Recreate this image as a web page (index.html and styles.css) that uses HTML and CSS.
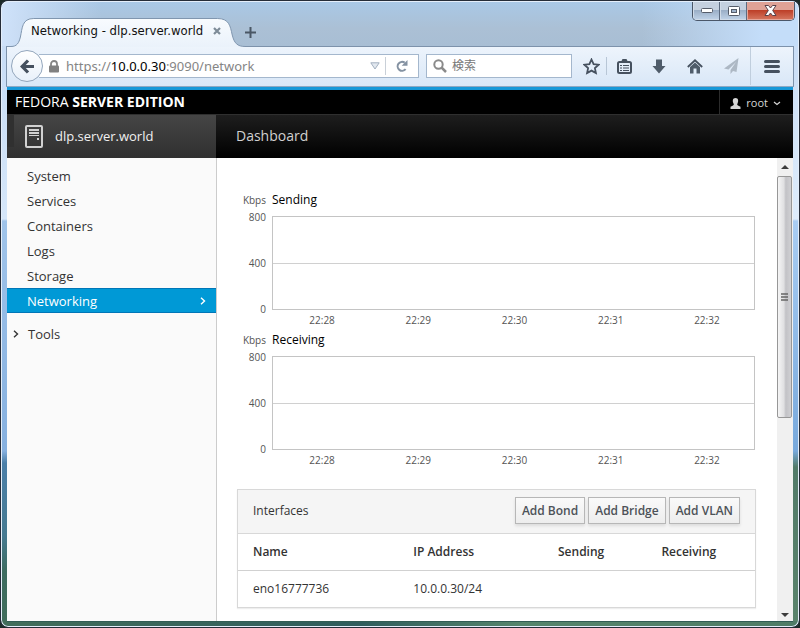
FILE: index.html
```html
<!DOCTYPE html>
<html lang="en">
<head>
<meta charset="utf-8">
<title>Networking - dlp.server.world</title>
<link rel="stylesheet" href="styles.css">
</head>
<body>
<div class="window">
  <header class="titlebar">
    <div class="tab">
      <svg class="tab-shape" viewBox="0 0 240 29" preserveAspectRatio="none" aria-hidden="true">
        <defs><linearGradient id="tabfill" x1="0" y1="0" x2="0" y2="1"><stop offset="0" stop-color="#f8fbfe"/><stop offset="1" stop-color="#eaf2fb"/></linearGradient></defs>
        <path d="M0 29V28.500H4C10 28.500 12 25 13.500 19C15.500 10 15 .500 27 .500H212C224 .500 225 8 227 17C229 25 232 28.500 240 28.500V29Z" fill="url(#tabfill)"/>
        <path d="M0 28.500H4C10 28.500 12 25 13.500 19C15.500 10 15 .500 27 .500H212C224 .500 225 8 227 17C229 25 232 28.500 240 28.500" fill="none" stroke="#8096af"/>
      </svg>
      <span class="tab-title">Networking - dlp.server.world</span>
      <button class="plain tab-close" aria-label="Close tab"><svg width="8" height="8" viewBox="0 0 8 8"><path d="M1 1L7 7M7 1L1 7" stroke="#7e8b98" stroke-width="2.200"/></svg></button>
    </div>
    <button class="plain new-tab" aria-label="New tab"><svg width="11" height="11" viewBox="0 0 11 11"><path d="M5.500 0V11M0 5.500H11" stroke="#4a5765" stroke-width="2"/></svg></button>
    <div class="window-buttons">
      <button class="win" aria-label="Minimize"><svg width="12" height="5" viewBox="0 0 12 5"><rect x=".5" y=".5" width="11" height="4" rx="1" fill="#fff" stroke="#555c69"/></svg></button>
      <button class="win" aria-label="Maximize"><svg width="12" height="10" viewBox="0 0 12 10"><rect x=".5" y=".5" width="11" height="9" rx="1" fill="#fff" stroke="#555c69"/><rect x="3.500" y="3.500" width="5" height="3" fill="#9db2cb" stroke="#555c69"/></svg></button>
      <button class="win win-close" aria-label="Close"><svg width="13" height="11" viewBox="0 0 13 11"><path d="M1 .5H4.500L6.500 3L8.500 .5H12L8.700 5.500L12 10.500H8.500L6.500 8L4.500 10.500H1L4.300 5.500Z" fill="#fff" stroke="#59424a"/></svg></button>
    </div>
  </header>

  <div class="toolbar">
    <button class="back" aria-label="Back"><svg width="15" height="15" viewBox="0 0 15 15"><path d="M8 1.500L2.200 7.500L8 13.500M2.500 7.500H14" fill="none" stroke="#46515f" stroke-width="3.200"/></svg></button>
    <div class="urlbar">
      <svg width="10" height="13" viewBox="0 0 10 13"><path d="M2 7V4A3 3 0 0 1 8 4V7" fill="none" stroke="#858585" stroke-width="1.800"/><rect y="5.500" width="10" height="7" rx="1" fill="#808080"/></svg>
      <a class="url" href="#">https://<b>10.0.0.30</b>:9090/network</a>
      <button class="plain" aria-label="History"><svg width="10" height="8" viewBox="0 0 10 8"><path d="M.8 .8H9.200L5 7Z" fill="#e2e8ef" stroke="#a3b0bf"/></svg></button>
      <button class="plain reload" aria-label="Reload"><svg width="12" height="12" viewBox="0 0 12 12"><path d="M9.600 9.200A4.500 4.500 0 1 1 8.700 2.600" fill="none" stroke="#8492a2" stroke-width="2"/><path d="M11.500 0V5.800H5.700Z" fill="#8492a2"/></svg></button>
    </div>
    <label class="search">
      <svg width="14" height="14" viewBox="0 0 14 14"><circle cx="5.500" cy="5.500" r="4.200" fill="none" stroke="#8a8a8a" stroke-width="2"/><path d="M8.500 8.500L13 13" stroke="#8a8a8a" stroke-width="2.500"/></svg>
      <input type="search" placeholder="検索" aria-label="検索">
    </label>
    <button class="plain tool star" aria-label="Bookmark"><svg width="17" height="17" viewBox="0 0 17 17"><path d="M8.500 1.500L10.600 6.100L15.600 6.700L11.900 10.100L12.900 15.100L8.500 12.600L4.100 15.100L5.100 10.100L1.400 6.700L6.400 6.100Z" fill="none" stroke="#46515f" stroke-width="1.800"/></svg></button>
    <button class="plain tool" aria-label="Bookmarks list"><svg width="15" height="15" viewBox="0 0 15 15"><rect x="1" y="3" width="13" height="11" rx="1.500" fill="none" stroke="#46515f" stroke-width="2"/><path d="M4 3L5.500 0H9.500L11 3Z" fill="#46515f"/><path d="M3 6.500H12M3 9H12M3 11.500H12" stroke="#46515f"/><path d="M5.500 5V13" stroke="#e5eefa"/></svg></button>
    <button class="plain tool" aria-label="Downloads"><svg width="14" height="15" viewBox="0 0 14 15"><path d="M4 .5H10V7H13.500L7 14.500L.5 7H4Z" fill="#4f5c6a"/></svg></button>
    <button class="plain tool" aria-label="Home"><svg width="16" height="15" viewBox="0 0 16 15"><path d="M.8 8L8 1.300L15.200 8" fill="none" stroke="#46515f" stroke-width="1.800"/><path d="M3 8L8 3.500L13 8V14.500H9.500V9.500H6.500V14.500H3Z" fill="#4f5c6a"/></svg></button>
    <button class="plain tool" aria-label="Send"><svg width="15" height="16" viewBox="0 0 15 16"><path d="M14.500 0L0 10.500L4.500 11.500L12 4L6.500 12V16L9 13L12.500 14Z" fill="#adb8c4"/></svg></button>
    <button class="plain menu" aria-label="Menu"><svg width="16" height="13" viewBox="0 0 16 13"><path d="M1.500 1.500H14.500M1.500 6.500H14.500M1.500 11.500H14.500" stroke="#46515f" stroke-width="3" stroke-linecap="round"/></svg></button>
  </div>

  <div class="page">
    <div class="brand">
      <span>FEDORA <b>SERVER EDITION</b></span>
      <button class="plain user"><svg width="11" height="11" viewBox="0 0 11 11"><path d="M5.500 0C8.500 0 8.500 3 7.700 5C7 6.500 7 7 8 7.500L10.500 8.700V11H.5V8.700L3 7.500C4 7 4 6.500 3.300 5C2.500 3 2.500 0 5.500 0Z" fill="#d6d6d6"/></svg>root<svg width="8" height="5" viewBox="0 0 8 5"><path d="M1 1L4 3.500L7 1" fill="none" stroke="#d6d6d6" stroke-width="1.200"/></svg></button>
    </div>
    <nav class="topnav">
      <a class="host" href="#"><svg width="18" height="23" viewBox="0 0 18 23"><rect x="1" y="1" width="16" height="21" rx="1" fill="none" stroke="#d1d1d1" stroke-width="2"/><path d="M4 5H14M4 8H14" stroke="#d1d1d1" stroke-width="2"/><path d="M4 10.500H14" stroke="#d1d1d1"/><rect x="12" y="13" width="2" height="2" fill="#d1d1d1"/></svg>dlp.server.world</a>
      <a class="dashboard" href="#">Dashboard</a>
    </nav>
    <div class="body">
      <nav class="sidebar">
        <a href="#">System</a>
        <a href="#">Services</a>
        <a href="#">Containers</a>
        <a href="#">Logs</a>
        <a href="#">Storage</a>
        <a href="#" class="active">Networking<svg width="6" height="8" viewBox="0 0 6 8"><path d="M1 .8L4.500 4L1 7.200" fill="none" stroke="#fff" stroke-width="1.400"/></svg></a>
        <a href="#" class="tools"><svg width="6" height="8" viewBox="0 0 6 8"><path d="M1 .8L4.500 4L1 7.200" fill="none" stroke="#333" stroke-width="1.400"/></svg>Tools</a>
      </nav>
      <main class="content">
        <section class="chart">
          <div class="chart-head"><span class="unit">Kbps</span><h2>Sending</h2></div>
          <div class="chart-row">
            <div class="y-axis"><span>800</span><span>400</span><span>0</span></div>
            <div class="plot-col">
              <div class="plot"><div class="half"></div></div>
              <div class="x-axis"><span>22:28</span><span>22:29</span><span>22:30</span><span>22:31</span><span>22:32</span></div>
            </div>
          </div>
        </section>
        <section class="chart">
          <div class="chart-head"><span class="unit">Kbps</span><h2>Receiving</h2></div>
          <div class="chart-row">
            <div class="y-axis"><span>800</span><span>400</span><span>0</span></div>
            <div class="plot-col">
              <div class="plot"><div class="half"></div></div>
              <div class="x-axis"><span>22:28</span><span>22:29</span><span>22:30</span><span>22:31</span><span>22:32</span></div>
            </div>
          </div>
        </section>
        <section class="panel">
          <div class="panel-head">
            <h3>Interfaces</h3>
            <button class="btn">Add Bond</button>
            <button class="btn">Add Bridge</button>
            <button class="btn">Add VLAN</button>
          </div>
          <table>
            <thead><tr><th class="c-name">Name</th><th class="c-ip">IP Address</th><th class="c-send">Sending</th><th>Receiving</th></tr></thead>
            <tbody><tr><td>eno16777736</td><td>10.0.0.30/24</td><td></td><td></td></tr></tbody>
          </table>
        </section>
      </main>
      <div class="scrollbar" aria-hidden="true">
        <div class="arrow"><svg width="8" height="4" viewBox="0 0 8 4"><path d="M4 0L8 4H0Z" fill="#3c3c3c"/></svg></div>
        <div class="track"><div class="thumb"><svg width="8" height="8" viewBox="0 0 8 8"><path d="M0 1H7M0 4H7M0 7H7" stroke="#666" stroke-width="1.500"/></svg></div></div>
        <div class="arrow arrow-down"><svg width="8" height="4" viewBox="0 0 8 4"><path d="M4 4L0 0H8Z" fill="#3c3c3c"/></svg></div>
      </div>
    </div>
  </div>
</div>
</body>
</html>
```
FILE: styles.css
```css
* { box-sizing: border-box; }
body {
  margin: 0;
  background: #1c2a28;
  font: 13px/20px "Open Sans", "Noto Sans CJK JP", sans-serif;
  color: #333;
}
a { color: inherit; text-decoration: none; }
svg { display: block; flex: none; }
h2, h3 { margin: 0; font-weight: 400; }
button { font: inherit; color: inherit; }
.plain { display: flex; align-items: center; justify-content: center; border: 0; padding: 0; background: none; }

.window {
  display: flex;
  flex-direction: column;
  min-height: 100vh;
  padding: 0 5px 5px;
  border: 1px solid #252c38;
  border-radius: 8px;
  box-shadow: inset 0 0 0 1px #e4eefa;
  background:
    linear-gradient(90deg, #426e5b, #2f5d5d 45%, #55856c 65%, #4f7c66) bottom / 100% 6px no-repeat,
    linear-gradient(#c4daf5, #d5e6f9 218px, #a0c4ea 220px, #86b0df 450px, #4b7fa8 462px, #467a91 535px, #3d6c60 570px, #426e5b) left / 50% 100% no-repeat,
    linear-gradient(#c4daf5, #deecfb 218px, #a9cdf3 220px, #78a9dc 450px, #527b69 466px, #5b846c) right / 50% 100% no-repeat;
}

.titlebar {
  display: flex;
  align-items: flex-end;
  height: 45px;
  margin: 0 -4px;
  padding-left: 5px;
  border-top: 1px solid #e4eefa;
  border-radius: 7px 7px 0 0;
  background: linear-gradient(90deg, #cfe2fa, transparent 100px, transparent 640px, #c4ddf9 760px), linear-gradient(#a9c8e6, #abc0d5 60%, #a8bed4);
}
.tab {
  position: relative;
  display: flex;
  align-items: center;
  height: 29px;
  padding: 0 24px 3px;
  font: 13px/18px "DejaVu Sans Condensed", "Noto Sans", sans-serif;
  color: #111;
  margin-bottom: -1px;
}
.tab-shape { position: absolute; inset: 0; width: 100%; height: 100%; }
.tab-title, .tab-close { position: relative; }
.tab-close { margin-left: 10px; }
.new-tab { width: 11px; height: 28px; }
.window-buttons { display: flex; align-self: flex-start; height: 19px; margin: 0 3px 0 auto; border: 1px solid #4b5769; border-top: 0; border-radius: 0 0 5px 5px; overflow: hidden; }
.win {
  display: flex;
  align-items: center;
  justify-content: center;
  width: 27px;
  padding: 0;
  border: 1px solid #d0dbe8;
  border-top: 0;
  background: linear-gradient(#c4d0df 45%, #9bafc7 50%, #bdd0e5);
}
.win + .win { box-shadow: -1px 0 #5c6b80; }
.win-close { width: 47px; border-color: #e5a69a; background: linear-gradient(#dfa296 45%, #bd4029 50%, #d3725b); }

.toolbar {
  display: flex;
  align-items: center;
  height: 41px;
  padding: 0 0 1px 4px;
  border: 1px solid #7d92ab;
  border-bottom-color: #8fa8c2;
  background: linear-gradient(#edf4fc, #d9e7f7);
}
.back {
  display: flex;
  align-items: center;
  justify-content: center;
  flex: none;
  width: 32px;
  height: 32px;
  padding: 0;
  border: 1px solid #93a6bc;
  border-radius: 50%;
  background: linear-gradient(#fff, #e8f0fa);
  z-index: 1;
}
.urlbar, .search { display: flex; align-items: center; height: 24px; border: 1px solid #a4b7cd; background: #fff; }
.urlbar { flex: 380; margin-left: -4px; padding-left: 10px; min-width: 0; border-left: 0; }
.url { flex: 1; margin-left: 7px; font: 13px/20px "Noto Sans", sans-serif; color: #858585; }
.url b { font-weight: 400; color: #000; }
.reload { width: 33px; height: 18px; margin-left: 5px; border-left: 1px solid #c9d0d8; }
.search { flex: 142; min-width: 0; margin-left: 7px; padding-left: 6px; }
.search input { flex: 1; min-width: 0; border: 0; padding: 0 5px 2px; outline: 0; background: none; font: 12px/18px "Noto Sans CJK JP", sans-serif; }
.search input::placeholder { color: #777; opacity: 1; }
.tool { flex: none; width: 36px; height: 18px; }
.star + .tool { width: 34px; }
.star { width: 30px; margin-left: 5px; border-right: 1px solid #b8c6d6; }
.menu { flex: none; width: 43px; height: 38px; margin-left: 1px; border-left: 1px solid #c0cedd; }

.page {
  flex: 1;
  display: flex;
  flex-direction: column;
  margin: 0 1px;
  border-top: 3px solid #1798d8;
  border-bottom: 1px solid #315d55;
  background: #fff;
}
.brand {
  display: flex;
  align-items: stretch;
  justify-content: space-between;
  height: 24px;
  padding-left: 8px;
  font-size: 14px;
  line-height: 24px;
  background: #000;
  color: #fff;
}
.user { gap: 5px; padding: 2px 12px 0 10px; border-left: 1px solid #2c2c2c; font-size: 11px; color: #d6d6d6; }
.topnav { display: flex; height: 44px; border-top: 1px solid #2f2f2f; background: linear-gradient(#1e1e1e, #000); line-height: 42px; }
.host {
  display: flex;
  align-items: center;
  gap: 12px;
  width: 209px;
  padding: 0 0 1px 18px;
  background: linear-gradient(#303030, #303030) 0 0 / 7px 32px no-repeat, linear-gradient(#454545, #303030);
  color: #f0f0f0;
}
.dashboard { padding-left: 20px; font-size: 14px; color: #d1d1d1; }
.body { flex: 1; display: flex; }

.sidebar { width: 210px; padding-top: 5px; border-right: 1px solid #ccc; background: #fafafa; }
.sidebar a { display: flex; align-items: center; height: 25px; padding: 0 10px 0 20px; }
.sidebar .active { justify-content: space-between; border: solid #0076b7; border-width: 1px 0; background: #0099d6; color: #fff; }
.sidebar .tools { gap: 9px; margin-top: 8px; padding-left: 6px; }

.content { flex: 1; padding: 32px 22px 12px 20px; }
.chart { margin-bottom: 3px; font-size: 10px; line-height: 14px; color: #545454; }
.chart-head { display: flex; line-height: 20px; }
.chart-head h2 { font-size: 12px; color: #000; }
.unit, .y-axis { width: 35px; padding-right: 6px; text-align: right; }
.chart-row { display: flex; }
.y-axis { display: flex; flex-direction: column; justify-content: space-between; height: 106px; }
.plot-col { flex: 1; padding-top: 6px; }
.plot { height: 94px; border: 1px solid #c4c4c4; }
.half { height: 47px; border-bottom: 1px solid #d0d0d0; }
.x-axis { display: flex; padding: 3px 0 0 2px; text-align: center; }
.x-axis span { flex: 1; }

.panel { margin: 22px -1px 0 0; border: 1px solid #d8d8d8; box-shadow: 0 1px 1px #eee; font-size: 12px; }
.panel-head { display: flex; align-items: center; gap: 3px; height: 44px; padding: 0 15px 2px; border-bottom: 1px solid #d8d8d8; background: #f5f5f5; }
.panel-head h3 { flex: 1; font-size: 12px; }
.btn {
  height: 27px;
  padding: 0 6px;
  border: 1px solid #b7b7b7;
  background: linear-gradient(#fafafa, #ededed);
  box-shadow: 0 2px 3px rgba(0, 0, 0, .1);
  font-weight: 600;
  color: #4d5258;
}
table { width: 100%; border-collapse: separate; border-spacing: 0; table-layout: fixed; }
th, td { height: 37px; padding: 0 15px; text-align: left; }
td { height: 36px; }
th { font-weight: 600; border-bottom: 1px solid #d1d1d1; }
.c-name { width: 31%; }
.c-ip { width: 28%; }
.c-send { width: 20%; }

.scrollbar { display: flex; flex-direction: column; width: 16px; padding-right: 1px; background: #f0f0f0; }
.arrow { display: flex; align-items: center; justify-content: center; height: 18px; }
.arrow-down { height: 12px; }
.track { flex: 1; display: flex; align-items: flex-start; }
.thumb { display: flex; align-items: center; justify-content: center; width: 100%; height: 56%; border: 1px solid #979797; border-radius: 2px; background: linear-gradient(90deg, #f5f5f5, #e0e0e2 45%, #c2c2c6 60%, #d0d0d3); }
```
